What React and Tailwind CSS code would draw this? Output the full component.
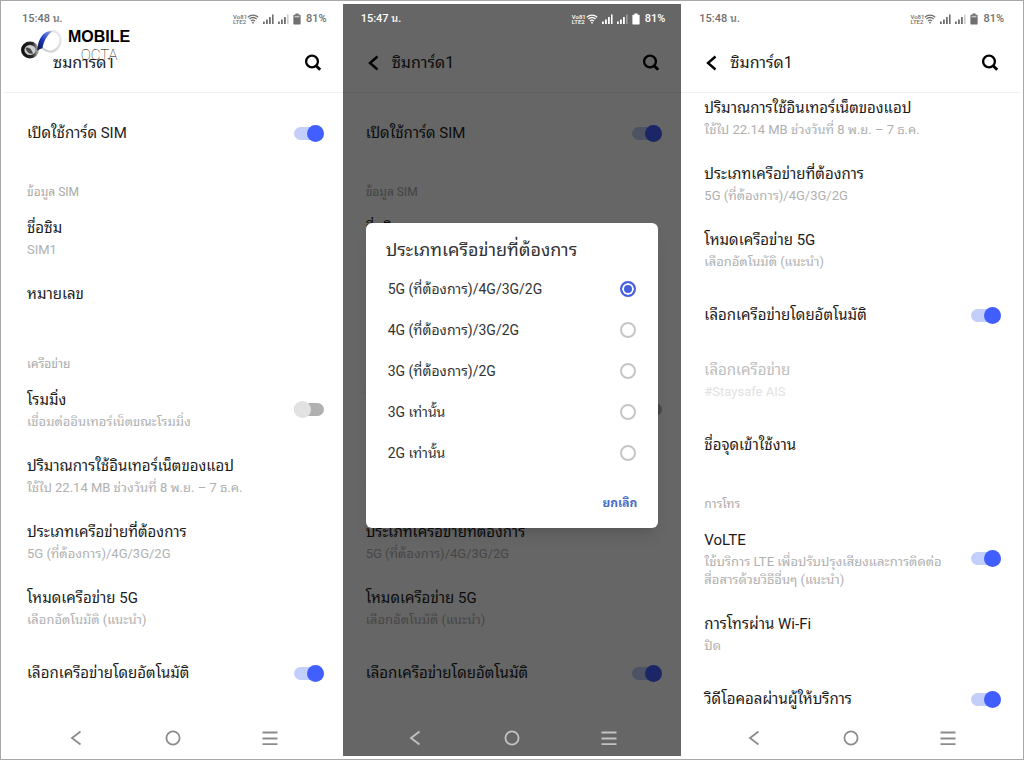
const networkOptions = [
  '5G (ที่ต้องการ)/4G/3G/2G',
  '4G (ที่ต้องการ)/3G/2G',
  '3G (ที่ต้องการ)/2G',
  '3G เท่านั้น',
  '2G เท่านั้น',
];

const usage = { title: 'ปริมาณการใช้อินเทอร์เน็ตของแอป', sub: 'ใช้ไป 22.14 MB ช่วงวันที่ 8 พ.ย. – 7 ธ.ค.' };
const preferred = { title: 'ประเภทเครือข่ายที่ต้องการ', sub: '5G (ที่ต้องการ)/4G/3G/2G' };
const mode5g = { title: 'โหมดเครือข่าย 5G', sub: 'เลือกอัตโนมัติ (แนะนำ)' };
const autoSelect = { title: 'เลือกเครือข่ายโดยอัตโนมัติ', toggle: true, on: true };

const simRows = [
  { title: 'เปิดใช้การ์ด SIM', toggle: true, on: true },
  { section: 'ข้อมูล SIM' },
  { title: 'ชื่อซิม', sub: 'SIM1' },
  { title: 'หมายเลข', sub: '\u00a0' },
  { section: 'เครือข่าย' },
  { title: 'โรมมิ่ง', sub: 'เชื่อมต่ออินเทอร์เน็ตขณะโรมมิ่ง', toggle: true, on: false },
  usage,
  preferred,
  mode5g,
  autoSelect,
];

const moreRows = [
  usage,
  preferred,
  mode5g,
  autoSelect,
  { title: 'เลือกเครือข่าย', sub: '#Staysafe AIS', disabled: true },
  { title: 'ชื่อจุดเข้าใช้งาน' },
  { section: 'การโทร' },
  { title: 'VoLTE', sub: 'ใช้บริการ LTE เพื่อปรับปรุงเสียงและการติดต่อสื่อสารด้วยวิธีอื่นๆ (แนะนำ)', toggle: true, on: true },
  { title: 'การโทรผ่าน Wi-Fi', sub: 'ปิด' },
  { title: 'วิดีโอคอลผ่านผู้ให้บริการ', toggle: true, on: true },
];

function Toggle({ on }) {
  return (
    <span className="relative flex h-[17px] w-[30px] shrink-0 items-center">
      <input type="checkbox" role="switch" defaultChecked={on} className="peer absolute inset-0 m-0 cursor-pointer opacity-0" />
      <span className="h-[13px] w-full rounded-full bg-[#b0b0b0] peer-checked:bg-[#c3cffb]" />
      <span className="pointer-events-none absolute left-0 size-[17px] rounded-full bg-[#e2e2e2] peer-checked:left-[13px] peer-checked:bg-[#415fff]" />
    </span>
  );
}

function Row({ row }) {
  if (row.section) {
    return <h2 className="h-10 pt-[18px] pl-[23px] text-[12px] leading-[18px] text-[#a9a9a9]">{row.section}</h2>;
  }
  const Tag = row.toggle ? 'label' : 'div';
  return (
    <Tag className={`flex items-center justify-between gap-6 pr-[19px] pl-[23px] ${row.sub ? 'pt-[10px] pb-3' : 'h-16'}`}>
      <span className="min-w-0">
        <span className={`block text-[15px] leading-[26px] ${row.disabled ? 'text-[#bdbdbd]' : 'text-[#1c1c1c]'}`}>{row.title}</span>
        {row.sub && (
          <span className={`block text-[13px] leading-[18px] ${row.disabled ? 'text-[#e2e2e2]' : 'text-[#b0b0b0]'}`}>{row.sub}</span>
        )}
      </span>
      {row.toggle && <Toggle on={row.on} />}
    </Tag>
  );
}

function Signal({ faded }) {
  return (
    <svg viewBox="0 0 11 10" className="h-[10px] w-[11px]" fill="currentColor">
      <rect x="0" y="7.5" width="1.8" height="2.5" />
      <rect x="3" y="5.5" width="1.8" height="4.5" />
      <rect x="6" y="3" width="1.8" height="7" />
      <rect x="9" y="0.5" width="1.6" height="9.5" opacity={faded ? 0.35 : 1} />
    </svg>
  );
}

function StatusBar({ time, light }) {
  return (
    <div className={`flex h-[29px] shrink-0 items-center justify-between pt-px pr-4 pl-[18px] text-[11px] font-medium ${light ? 'relative z-20 text-white' : 'text-[#6f6f6f]'}`}>
      <span>{time}</span>
      <span className="flex items-center">
        <span className="flex flex-col text-[6px] leading-[5px] font-medium">
          <span>Vo81</span>
          <span>LTE2</span>
        </span>
        <svg viewBox="0 0 12 10" className="h-[10px] w-3" fill="none" stroke="currentColor" strokeWidth="1.3">
          <path d="M0.8 3.2C3.8 0.5 8.2 0.5 11.2 3.2M2.4 5.1C4.5 3.2 7.5 3.2 9.6 5.1M4 7C5.2 6 6.8 6 8 7" />
          <circle cx="6" cy="8.7" r="0.9" fill="currentColor" stroke="none" />
        </svg>
        <span className="ml-1 flex gap-1">
          <Signal />
          <Signal faded />
        </span>
        <svg viewBox="0 0 8 12" className="mr-[5px] ml-1 h-3 w-2" fill="currentColor">
          <path d="M2.4 0.6h3.2v1.2H7a.6.6 0 0 1 .6.6v8.4a.6.6 0 0 1-.6.6H1a.6.6 0 0 1-.6-.6V2.4a.6.6 0 0 1 .6-.6h1.4z" />
          {!light && <rect x="1.6" y="2.8" width="4.8" height="1.6" fill="#c4c4c4" />}
        </svg>
        <span>81%</span>
      </span>
    </div>
  );
}

function Watermark() {
  return (
    <div className="absolute top-6 left-4 flex h-[30px] items-start bg-white">
      <svg viewBox="0 0 44 34" className="h-[34px] w-11" fill="none">
        <defs>
          <linearGradient id="band" x1="0" y1="1" x2="1" y2="0">
            <stop offset="0" stopColor="#0c1026" />
            <stop offset="0.45" stopColor="#1a36c0" />
            <stop offset="1" stopColor="#8fa6ec" />
          </linearGradient>
          <linearGradient id="arc" x1="0" y1="1" x2="1" y2="0">
            <stop offset="0" stopColor="#c9cbd0" />
            <stop offset="1" stopColor="#ececee" />
          </linearGradient>
          <linearGradient id="ring" x1="0" y1="0" x2="1" y2="0">
            <stop offset="0" stopColor="#111" />
            <stop offset="0.7" stopColor="#2c2c2c" />
            <stop offset="1" stopColor="#a5a5a5" />
          </linearGradient>
        </defs>
        <path d="M30 3.5c6-1.500 10.500 3 10.500 8.500 0 6.500-5 12-11 11.500-4-.3-6.500-2.500-9-5" stroke="url(#arc)" strokeWidth="2.200" />
        <ellipse cx="10" cy="22" rx="7.300" ry="6.800" fill="#cfcfcf" stroke="url(#ring)" strokeWidth="3.400" />
        <path d="M5.500 20c3-1.500 6 .5 7.500 5.500-3 1-6.500-1-7.500-5.500z" fill="#4a4a4a" />
        <path d="M17 22.500L22.500 20c1-6 4-12.500 9.500-16.500-6-1.800-11 4-13.500 11z" fill="url(#band)" />
      </svg>
      <div className="ml-1 flex flex-col items-center">
        <span className="font-['Liberation_Sans',sans-serif] text-[16px] leading-[18px] font-bold text-black">MOBILE</span>
        <span className="text-[15px] leading-[18px] font-thin text-black">OCTA</span>
      </div>
    </div>
  );
}

function NetworkDialog() {
  return (
    <div className="absolute inset-0 z-10 flex items-center bg-black/60 px-[23px] pb-[10px]">
      <div role="dialog" aria-labelledby="network-title" className="w-full rounded-md bg-white pt-[13px] pb-[13px] shadow-lg">
        <h2 id="network-title" className="pl-5 text-[18px] leading-7 text-[#333]">ประเภทเครือข่ายที่ต้องการ</h2>
        <div className="mt-[5px]">
          {networkOptions.map((option, i) => (
            <label key={option} className="flex h-[41px] items-center justify-between pr-[22px] pl-[22px] text-[14px] text-[#333]">
              {option}
              <input
                type="radio"
                name="network"
                defaultChecked={i === 0}
                className="m-0 size-4 appearance-none rounded-full border-2 border-[#c6c6c6] checked:border-[#4560dd] checked:bg-[#4560dd] checked:shadow-[inset_0_0_0_2px_white]"
              />
            </label>
          ))}
        </div>
        <div className="flex justify-end pt-[17px] pr-[21px]">
          <button className="text-[12px] leading-6 font-bold text-[#4a6bc8]">ยกเลิก</button>
        </div>
      </div>
    </div>
  );
}

function NavBar({ light }) {
  return (
    <nav className={`flex h-9 shrink-0 items-center justify-center gap-[81px] ${light ? 'relative z-20 text-[#c2c2c2]' : 'bg-white text-[#8c8c8c]'}`}>
      <button aria-label="กลับ">
        <svg viewBox="0 0 16 16" className="size-4" fill="none" stroke="currentColor" strokeWidth="1.8">
          <path d="M12.500 1.500L4 8l8.500 6.500" />
        </svg>
      </button>
      <button aria-label="หน้าแรก">
        <svg viewBox="0 0 16 16" className="size-4" fill="none" stroke="currentColor" strokeWidth="1.8">
          <circle cx="8" cy="8" r="6.600" />
        </svg>
      </button>
      <button aria-label="เมนู">
        <svg viewBox="0 0 16 16" className="size-4" fill="none" stroke="currentColor" strokeWidth="1.8">
          <path d="M0.500 2.500h15M0.500 8.500h15M0.500 14.200h15" />
        </svg>
      </button>
    </nav>
  );
}

function Phone({ time, rows, dimmed, watermark, scrolled }) {
  return (
    <section className="relative flex min-w-0 flex-1 flex-col overflow-hidden bg-white">
      <StatusBar time={time} light={dimmed} />
      <header className="flex h-[60px] shrink-0 items-center border-b border-[#f1f1f1] pr-[21px] pl-[22px] text-black">
        <button aria-label="ย้อนกลับ" className={watermark ? 'invisible' : ''}>
          <svg viewBox="0 0 18 18" className="size-[18px]" fill="none" stroke="currentColor" strokeWidth="2.400">
            <path d="M12.500 2.500L5 9l7.500 6.500" />
          </svg>
        </button>
        <h1 className="ml-[9px] flex-1 text-[16px] leading-6 text-[#1c1c1c]">ซิมการ์ด1</h1>
        <button aria-label="ค้นหา">
          <svg viewBox="0 0 18 18" className="size-[18px]" fill="none" stroke="currentColor" strokeWidth="2.300">
            <circle cx="8" cy="7.500" r="5.900" />
            <path d="M12.200 11.700l4 4" strokeWidth="2.800" />
          </svg>
        </button>
      </header>
      <div className="min-h-0 flex-1 overflow-hidden">
        <div className={scrolled ? '-mt-2' : 'pt-2'}>
          {rows.map((row, i) => <Row key={i} row={row} />)}
        </div>
      </div>
      <NavBar light={dimmed} />
      {watermark && <Watermark />}
      {dimmed && <NetworkDialog />}
    </section>
  );
}

export default function App() {
  return (
    <main className="flex h-screen border border-[#a8a8a8] bg-white p-[3px] font-[Roboto,'Noto_Sans_Thai_Looped','Noto_Looped_Thai',Loma,Waree,Garuda,sans-serif]">
      <Phone time="15:48 น." rows={simRows} watermark />
      <Phone time="15:47 น." rows={simRows} dimmed />
      <Phone time="15:48 น." rows={moreRows} scrolled />
    </main>
  );
}
